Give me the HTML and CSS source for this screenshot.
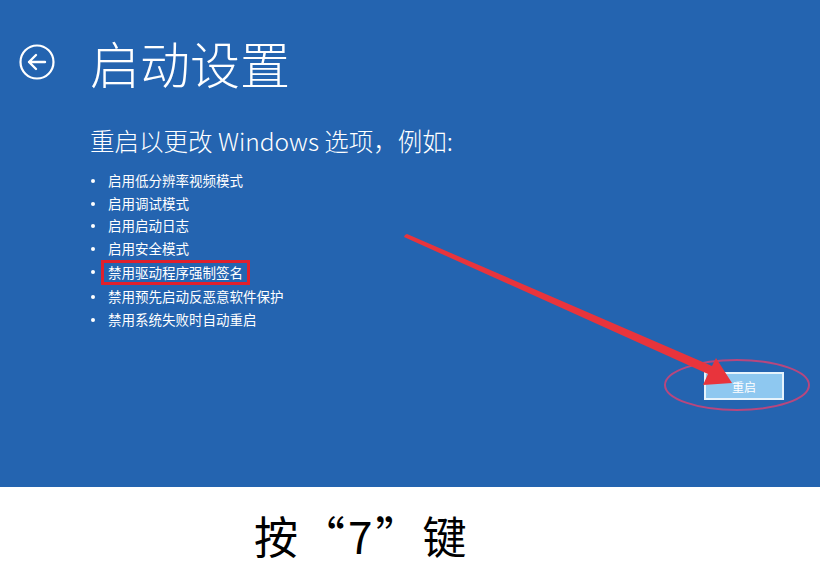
FILE: index.html
```html
<!DOCTYPE html>
<html lang="zh-CN">
<head>
<meta charset="utf-8">
<title>启动设置</title>
<link rel="stylesheet" href="styles.css">
</head>
<body>
<div class="page">
  <section class="panel">
    <header class="title-row">
      <svg class="back" width="38" height="38" viewBox="0 0 38 38" aria-hidden="true">
        <circle cx="19" cy="19" r="16.5" fill="none" stroke="#fff" stroke-width="2.2"/>
        <path d="M27 19 H11 M18 12 L11 19 L18 26" fill="none" stroke="#fff" stroke-width="2.4" stroke-linecap="round" stroke-linejoin="round"/>
      </svg>
      <h1 class="title">启动设置</h1>
    </header>
    <p class="subtitle">重启以更改 Windows 选项，例如:</p>
    <ul class="options">
      <li>启用低分辨率视频模式</li>
      <li>启用调试模式</li>
      <li>启用启动日志</li>
      <li>启用安全模式</li>
      <li><span class="highlight">禁用驱动程序强制签名</span></li>
      <li>禁用预先启动反恶意软件保护</li>
      <li>禁用系统失败时自动重启</li>
    </ul>
    <div class="actions">
      <button class="restart">重启</button>
    </div>
    <svg class="annot" width="820" height="487" viewBox="0 0 820 487" aria-hidden="true">
      <ellipse cx="737" cy="385" rx="72" ry="25" fill="none" stroke="#b8477e" stroke-width="2"/>
      <polygon points="405,235 407,234 712,366 716,358 732,383 703,385 708,374 404,237" fill="#e8343c"/>
    </svg>
  </section>
  <footer class="caption">按“7”键</footer>
</div>
</body>
</html>
```
FILE: styles.css
```css
html, body {
  margin: 0;
  padding: 0;
  background: #fff;
}
.page {
  width: 820px;
  height: 584px;
  overflow: hidden;
  font-family: "Noto Sans CJK SC", "Noto Sans", sans-serif;
}
.panel {
  position: relative;
  height: 487px;
  box-sizing: border-box;
  background: #2464b0;
  color: #fff;
  padding: 25px 0 0 18px;
}
.title-row {
  display: flex;
  align-items: center;
  gap: 34px;
  height: 74px;
}
.back {
  display: block;
  flex: none;
}
.title {
  margin: 0;
  font-size: 50px;
  font-weight: 300;
  line-height: 74px;
  letter-spacing: 0;
}
.subtitle {
  margin: 27px 0 0 72px;
  font-size: 24.5px;
  font-weight: 300;
  line-height: 30px;
}
.options {
  list-style: none;
  margin: 13px 0 0 75px;
  padding: 0;
  font-size: 13.5px;
  line-height: 22.7px;
}
.options li {
  position: relative;
  padding-left: 15px;
}
.options li::before {
  content: "";
  position: absolute;
  left: -2px;
  top: 10px;
  width: 4px;
  height: 4px;
  border-radius: 50%;
  background: #fff;
}
.highlight {
  display: inline-block;
  margin-left: -7px;
  padding: 0 4px;
  line-height: 19px;
  border: 3px solid #e0202c;
}
.actions {
  display: flex;
  justify-content: flex-end;
  padding-right: 36px;
  margin-top: 42px;
}
.restart {
  width: 80px;
  height: 28px;
  box-sizing: border-box;
  background: #8ec8f0;
  border: 2px solid #e6f3fc;
  color: #fff;
  font-family: inherit;
  font-size: 12px;
  padding: 0;
}
.annot {
  position: absolute;
  left: 0;
  top: 0;
}
.caption {
  padding: 20px 0 0 254px;
  font-size: 44px;
  font-weight: 400;
  letter-spacing: 3px;
  line-height: 56px;
  color: #000;
}
```
